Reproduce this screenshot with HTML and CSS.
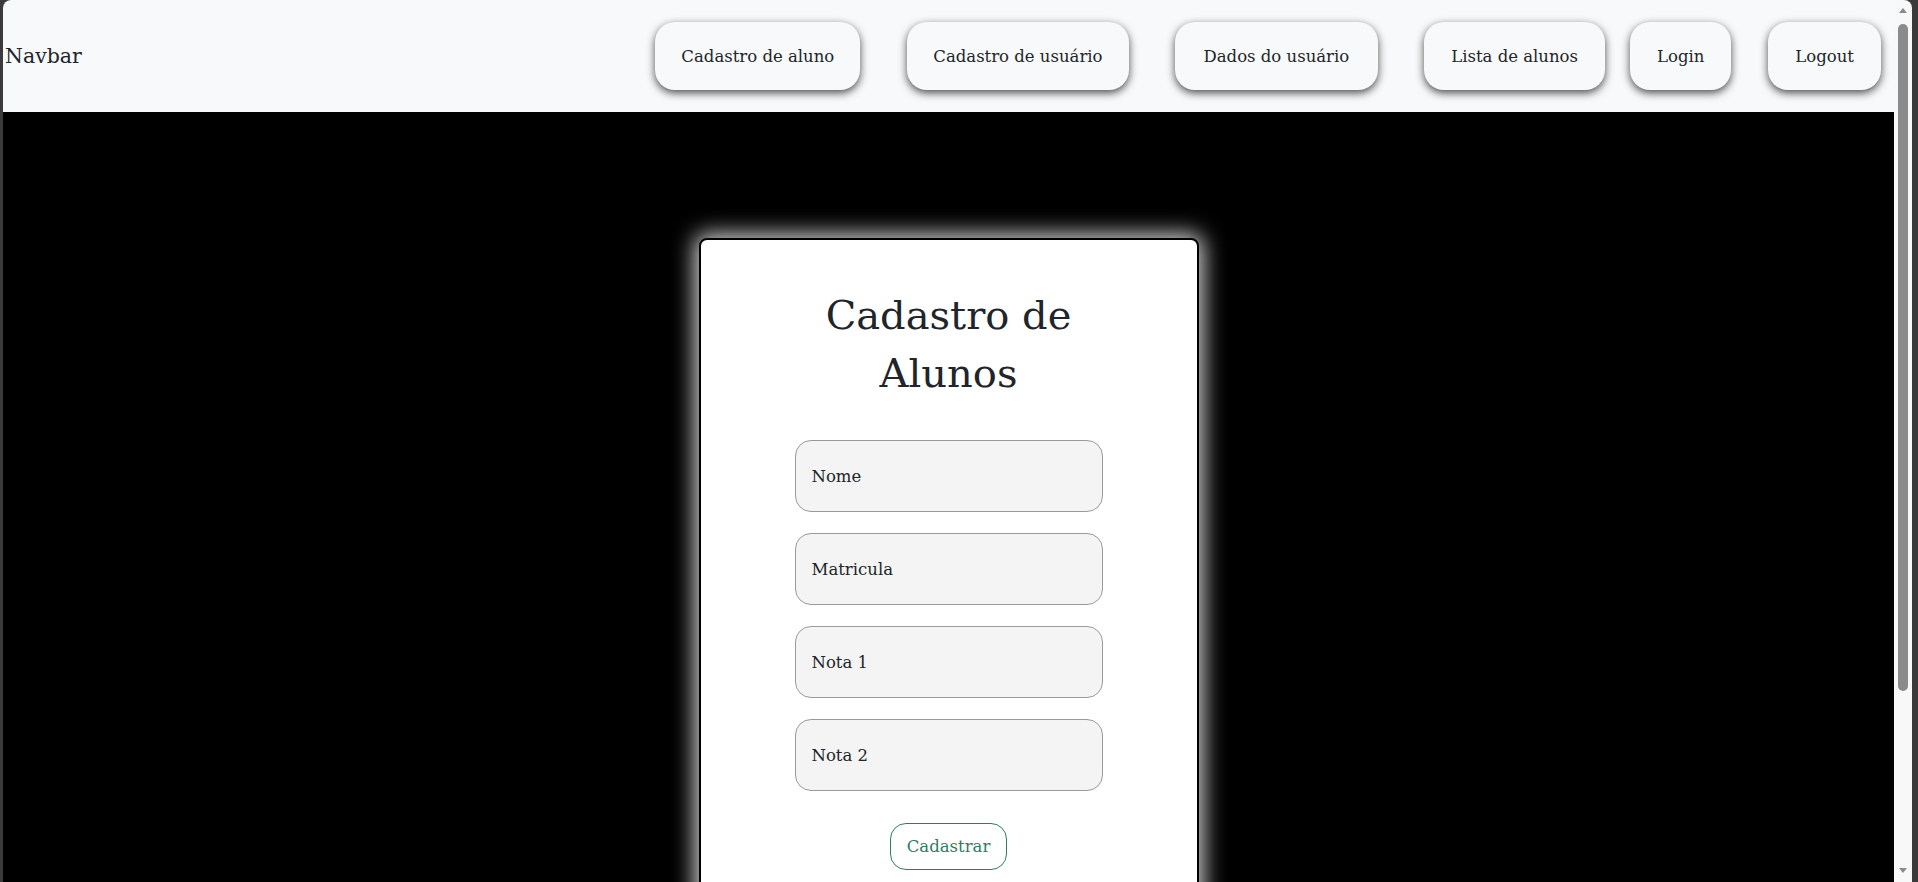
FILE: index.html
```html
<!DOCTYPE html>
<html lang="pt-BR">
<head>
<meta charset="utf-8">
<title>Cadastro de Alunos</title>
<link rel="stylesheet" href="styles.css">
</head>
<body>
<div class="window">
  <div class="viewport">
    <nav class="navbar">
      <a class="brand" href="#">Navbar</a>
      <ul class="nav">
        <li class="nav-item"><button class="nav-btn">Cadastro de aluno</button></li>
        <li class="nav-item wide-gap"><button class="nav-btn">Cadastro de usuário</button></li>
        <li class="nav-item"><button class="nav-btn wide">Dados do usuário</button></li>
        <li class="nav-item"><button class="nav-btn roomy">Lista de alunos</button></li>
        <li class="nav-item tight"><button class="nav-btn roomy">Login</button></li>
        <li class="nav-item mid"><button class="nav-btn roomy">Logout</button></li>
      </ul>
    </nav>
    <main class="content">
      <section class="card">
        <h1 class="title">Cadastro de Alunos</h1>
        <form class="form">
          <input class="field" type="text" placeholder="Nome">
          <input class="field" type="text" placeholder="Matricula">
          <input class="field" type="text" placeholder="Nota 1">
          <input class="field" type="text" placeholder="Nota 2">
          <button class="submit" type="button">Cadastrar</button>
        </form>
      </section>
    </main>
  </div>
  <div class="scrollbar">
    <span class="arrow up"></span>
    <span class="thumb"></span>
    <span class="arrow down"></span>
  </div>
</div>
</body>
</html>
```

FILE: styles.css
```css
* {
  box-sizing: border-box;
}

html, body {
  margin: 0;
  height: 100%;
}

body {
  background: #3a3a3a;
  overflow: hidden;
  font-family: "DejaVu Serif", "Liberation Serif", serif;
  color: #212529;
}

.window {
  display: flex;
  height: 100%;
  margin: 0 6px 0 3px;
  border-radius: 8px 8px 0 0;
  overflow: hidden;
}

.viewport {
  flex: 1;
  background: #000;
  overflow: hidden;
  display: flex;
  flex-direction: column;
}

.navbar {
  flex: none;
  height: 112px;
  background: #f8f9fa;
  display: flex;
  align-items: center;
  padding: 0 13px 0 2px;
}

.brand {
  font-size: 20.5px;
  color: #212529;
  text-decoration: none;
  line-height: 1.5;
}

.nav {
  margin: 0 0 0 auto;
  padding: 0;
  list-style: none;
  display: flex;
  align-items: center;
}

.nav-item + .nav-item {
  margin-left: 46px;
}

.nav-item.wide-gap {
  margin-left: 47px;
}

.nav-item.tight {
  margin-left: 25px;
}

.nav-item.mid {
  margin-left: 37px;
}

.nav-btn {
  height: 68px;
  padding: 0 26px;
  border: none;
  border-radius: 20px;
  background: #f8f9fa;
  color: #212529;
  font-family: inherit;
  font-size: 16.5px;
  box-shadow: 0 3px 8px rgba(0, 0, 0, 0.7);
  cursor: pointer;
}

.nav-btn.wide {
  padding: 0 29px;
}

.nav-btn.roomy {
  padding: 0 27px;
}

.content {
  flex: 1;
  display: flex;
  justify-content: center;
  align-items: flex-start;
  padding-top: 126px;
}

.card {
  width: 500px;
  background: #fff;
  border: 2px solid #000;
  border-radius: 8px;
  box-shadow: 0 0 22px 4px rgba(255, 255, 255, 0.85);
  padding: 46px 0 80px;
  text-align: center;
}

.title {
  max-width: 330px;
  margin: 0 auto;
  font-size: 40px;
  font-weight: normal;
  line-height: 58px;
  color: #212529;
}

.form {
  margin-top: 38px;
  display: flex;
  flex-direction: column;
  align-items: center;
  gap: 21px;
}

.field {
  width: 308px;
  height: 72px;
  padding: 0 16px;
  border: 1px solid #9a9a9a;
  border-radius: 16px;
  background: #f4f4f4;
  font-family: inherit;
  font-size: 16.5px;
  color: #212529;
}

.field::placeholder {
  color: #212529;
  opacity: 1;
}

.submit {
  margin-top: 11px;
  height: 47px;
  padding: 0 16px;
  border: 1px solid #2f7d60;
  border-radius: 16px;
  background: #fff;
  color: #2f7d60;
  font-family: inherit;
  font-size: 16.5px;
  cursor: pointer;
}

.scrollbar {
  flex: none;
  width: 18px;
  background: #f8f8f8;
  display: flex;
  flex-direction: column;
  align-items: center;
  padding: 8px 0 9px;
}

.arrow {
  width: 0;
  height: 0;
  border-left: 4px solid transparent;
  border-right: 4px solid transparent;
}

.arrow.up {
  border-bottom: 5px solid #8a8a8a;
}

.arrow.down {
  margin-top: auto;
  border-top: 5px solid #8a8a8a;
}

.thumb {
  width: 10px;
  height: 667px;
  margin-top: 11px;
  background: #8b8b8b;
  border-radius: 5px;
}
```
